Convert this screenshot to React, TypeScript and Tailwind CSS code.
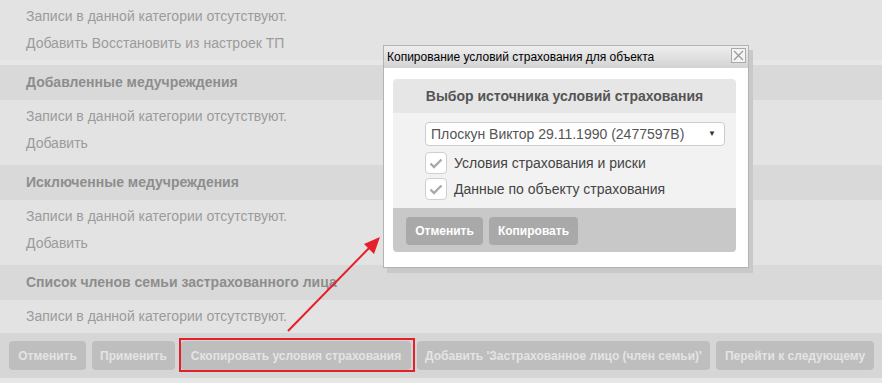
import { ReactNode } from "react";

const Line = ({ children }: { children: ReactNode }) => (
  <div className="h-[27px] leading-[27px] text-[14px] text-[#9b9b9b]">{children}</div>
);

const SectionHeader = ({ title }: { title: string }) => (
  <div className="h-[35px] bg-[#d9d9d9] pl-[26px] flex items-center text-[14px] font-bold text-[#8d8d8d]">
    {title}
  </div>
);

const Check = () => (
  <span className="w-[22px] h-[22px] rounded-[4px] border border-[#cfcfcf] bg-white flex items-center justify-center">
    <svg width="16" height="16" viewBox="0 0 16 16">
      <path d="M2.5 8.5 L6 12 L13.5 4.5" fill="none" stroke="#a9a9a9" strokeWidth="2.4" />
    </svg>
  </span>
);

const barButtons = [
  { name: "Отменить", w: "w-[77px]" },
  { name: "Применить", w: "w-[83px]" },
  { name: "Скопировать условия страхования", w: "w-[230px]", marked: true },
  { name: "Добавить 'Застрахованное лицо (член семьи)'", w: "w-[293px]" },
  { name: "Перейти к следующему", w: "w-[158px]" },
];

const App = () => {
  return (
    <div
      className="relative w-[882px] h-[383px] overflow-hidden bg-[#e3e3e3]"
      style={{ fontFamily: '"Liberation Sans", Arial, sans-serif' }}
    >
      {/* Top block */}
      <div className="pl-[26px] pt-[3px] pb-[3px]">
        <Line>Записи в данной категории отсутствуют.</Line>
        <Line>Добавить Восстановить из настроек ТП</Line>
      </div>
      <div className="h-[5px] bg-[#e7e7e7]" />

      <SectionHeader title="Добавленные медучреждения" />
      <div className="pl-[26px] pt-[3px] pb-[8px]">
        <Line>Записи в данной категории отсутствуют.</Line>
        <Line>Добавить</Line>
      </div>

      <SectionHeader title="Исключенные медучреждения" />
      <div className="pl-[26px] pt-[3px] pb-[8px]">
        <Line>Записи в данной категории отсутствуют.</Line>
        <Line>Добавить</Line>
      </div>

      <SectionHeader title="Список членов семьи застрахованного лица" />
      <div className="pl-[26px] pt-[3px] pb-[3px]">
        <Line>Записи в данной категории отсутствуют.</Line>
      </div>

      {/* Bottom button bar */}
      <div className="h-[45px] bg-[#d6d6d6] flex items-start gap-[6px] pl-[9px] pt-[8px]">
        {barButtons.map((b, i) => (
          <div
            key={i}
            className={`relative h-[29px] ${b.w} rounded-[4px] bg-[#bebebe] flex items-center justify-center text-[12px] font-bold text-[#e4e4e4]`}
          >
            {b.name}
            {b.marked && (
              <span className="absolute -left-[2px] -right-[4px] -top-[3px] -bottom-[2px] border-2 border-[#e5202a]" />
            )}
          </div>
        ))}
      </div>
      <div className="h-[5px] bg-[#e6e6e6]" />

      {/* Red arrow */}
      <svg className="absolute left-0 top-0" width="882" height="383">
        <line x1="288" y1="331" x2="372" y2="245" stroke="#e5202a" strokeWidth="2" />
        <polygon points="380,237 364,244 374,254" fill="#e5202a" />
      </svg>

      {/* Dialog */}
      <div className="absolute left-[383px] top-[45px] w-[366px] h-[223px] border border-[#b3b3b3] bg-white shadow-[4px_5px_0_#c9c9c9]">
        <div className="relative h-[22px] bg-linear-to-b from-[#eeeeee] to-[#d3d3d3] flex items-center pl-[3px] text-[12px] text-black">
          Копирование условий страхования для объекта
          <span className="absolute right-[2px] top-[2px] w-[15px] h-[15px] border border-[#a9a9a9] bg-[#f4f4f4] flex items-center justify-center">
            <svg width="11" height="11" viewBox="0 0 11 11">
              <path d="M1 1 L10 10 M10 1 L1 10" stroke="#9a9a9a" strokeWidth="1.3" />
            </svg>
          </span>
        </div>

        <div className="ml-[9px] mt-[11px] w-[343px] rounded-[4px] overflow-hidden">
          <div className="h-[34px] bg-[#e6e6e6] flex items-center justify-center text-[14px] font-bold text-[#555]">
            Выбор источника условий страхования
          </div>
          <div className="h-[95px] bg-[#f2f2f2] pt-[9px] pl-[32px]">
            <div className="w-[300px] h-[24px] rounded-[4px] border border-[#cccccc] bg-white flex items-center justify-between pl-[5px] pr-[8px] text-[14px] text-[#555]">
              <span>Плоскун Виктор 29.11.1990 (2477597В)</span>
              <span className="text-[8px] text-[#333]">▼</span>
            </div>
            <div className="mt-[6px] flex items-center gap-[7px] text-[14px] text-[#444]">
              <Check />
              Условия страхования и риски
            </div>
            <div className="mt-[4px] flex items-center gap-[7px] text-[14px] text-[#444]">
              <Check />
              Данные по объекту страхования
            </div>
          </div>
          <div className="h-[44px] bg-[#c8c8c8] flex items-start gap-[6px] pl-[13px] pt-[9px]">
            <div className="h-[28px] w-[77px] rounded-[4px] bg-[#a9a9a9] flex items-center justify-center text-[12px] font-bold text-white">
              Отменить
            </div>
            <div className="h-[28px] w-[89px] rounded-[4px] bg-[#a9a9a9] flex items-center justify-center text-[12px] font-bold text-white">
              Копировать
            </div>
          </div>
        </div>
      </div>
    </div>
  );
};

export default App;
